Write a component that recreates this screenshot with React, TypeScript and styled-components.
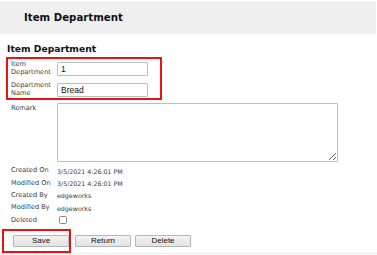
import React, { FC } from 'react';
import styled, { createGlobalStyle } from 'styled-components';

const GlobalStyle = createGlobalStyle`
  body {
    margin: 0;
    background: #ffffff;
    font-family: 'DejaVu Sans', Verdana, sans-serif;
    color: #222;
  }
`;

const Page = styled.div`
  width: 377px;
  height: 255px;
  overflow: hidden;
  display: flex;
  flex-direction: column;
`;

const Header = styled.div`
  margin-top: 1px;
  height: 33px;
  width: 376px;
  background-color: #efefef;
  display: flex;
  align-items: center;
  padding-left: 24px;
  box-sizing: border-box;
  font-size: 10.2px;
  font-weight: bold;
  color: #111;
`;

const SectionTitle = styled.div`
  margin-top: 8px;
  padding-left: 7px;
  height: 14px;
  line-height: 14px;
  font-size: 9.2px;
  font-weight: bold;
  color: #111;
`;

const Highlight = styled.div`
  margin: 1px 0 0 6px;
  width: 156px;
  box-sizing: border-box;
  border: 2px solid #ee1111;
  padding: 2px 0 2px 3px;
  display: flex;
  flex-direction: column;
  gap: 7px;
`;

const Row = styled.div<{ $height?: number; $top?: boolean }>`
  display: grid;
  grid-template-columns: 46px auto;
  align-items: ${({ $top }) => ($top ? 'start' : 'center')};
  height: ${({ $height }) => ($height ? `${$height}px` : 'auto')};
`;

const Label = styled.div`
  font-size: 6.6px;
  line-height: 7.5px;
  color: #3a3a3a;
`;

const Value = styled.div`
  font-size: 6.3px;
  color: #3a3a3a;
`;

const TextInput = styled.input`
  width: 91px;
  height: 14px;
  box-sizing: border-box;
  border: 1px solid #bdbdbd;
  border-radius: 1px;
  padding: 0 3px;
  margin: 0;
  font-family: 'Liberation Sans', Arial, sans-serif;
  font-size: 8.5px;
  color: #111;
  outline: none;
`;

const Fields = styled.div`
  padding-left: 11px;
  display: flex;
  flex-direction: column;
`;

const RemarkRow = styled(Row)`
  margin-top: 3px;
`;

const RemarkLabel = styled(Label)`
  padding-top: 2px;
`;

const TextArea = styled.textarea`
  width: 281px;
  height: 59px;
  box-sizing: border-box;
  border: 1px solid #bdbdbd;
  border-radius: 1px;
  margin: 0;
  resize: both;
  outline: none;
`;

const Info = styled.div`
  margin-top: 3px;
  display: flex;
  flex-direction: column;
`;

const CheckBox = styled.input`
  appearance: none;
  width: 8px;
  height: 8px;
  box-sizing: border-box;
  margin: 0 0 0 2px;
  border: 1px solid #8a8a8a;
  border-radius: 1.5px;
  background: #fff;
`;

const ButtonRow = styled.div`
  margin-top: 3px;
  padding-left: 2px;
  display: flex;
  align-items: center;
  gap: 4px;
  height: 24px;
  border-bottom: 1px solid #eeeeee;
`;

const SaveFrame = styled.div`
  border: 2px solid #ee1111;
  box-sizing: border-box;
  width: 69px;
  height: 24px;
  padding: 4px 1px 0 9px;
`;

const Button = styled.button`
  display: block;
  width: 56px;
  height: 12px;
  box-sizing: border-box;
  padding: 0;
  border: 1px solid #b5b5b5;
  border-radius: 1px;
  background: linear-gradient(#f3f3f3, #e3e3e3);
  font-family: 'Liberation Sans', Arial, sans-serif;
  font-size: 8px;
  line-height: 10px;
  color: #111;
`;

const infoRows = [
  { label: 'Created On', value: '3/5/2021 4:26:01 PM' },
  { label: 'Modified On', value: '3/5/2021 4:26:01 PM' },
  { label: 'Created By', value: 'edgeworks' },
  { label: 'Modified By', value: 'edgeworks' },
];

const App: FC = () => (
  <Page>
    <GlobalStyle />
    <Header>Item Department</Header>
    <SectionTitle>Item Department</SectionTitle>
    <Highlight>
      <Row $height={14}>
        <Label>
          Item
          <br />
          Department
        </Label>
        <TextInput defaultValue="1" />
      </Row>
      <Row $height={14}>
        <Label>
          Department
          <br />
          Name
        </Label>
        <TextInput defaultValue="Bread" />
      </Row>
    </Highlight>
    <Fields>
      <RemarkRow $top>
        <RemarkLabel>Remark</RemarkLabel>
        <TextArea />
      </RemarkRow>
      <Info>
        {infoRows.map((r) => (
          <Row key={r.label} $height={12.3}>
            <Label>{r.label}</Label>
            <Value>{r.value}</Value>
          </Row>
        ))}
        <Row $height={12.3}>
          <Label>Deleted</Label>
          <CheckBox type="checkbox" />
        </Row>
      </Info>
    </Fields>
    <ButtonRow>
      <SaveFrame>
        <Button>Save</Button>
      </SaveFrame>
      <Button>Return</Button>
      <Button>Delete</Button>
    </ButtonRow>
  </Page>
);

export default App;
